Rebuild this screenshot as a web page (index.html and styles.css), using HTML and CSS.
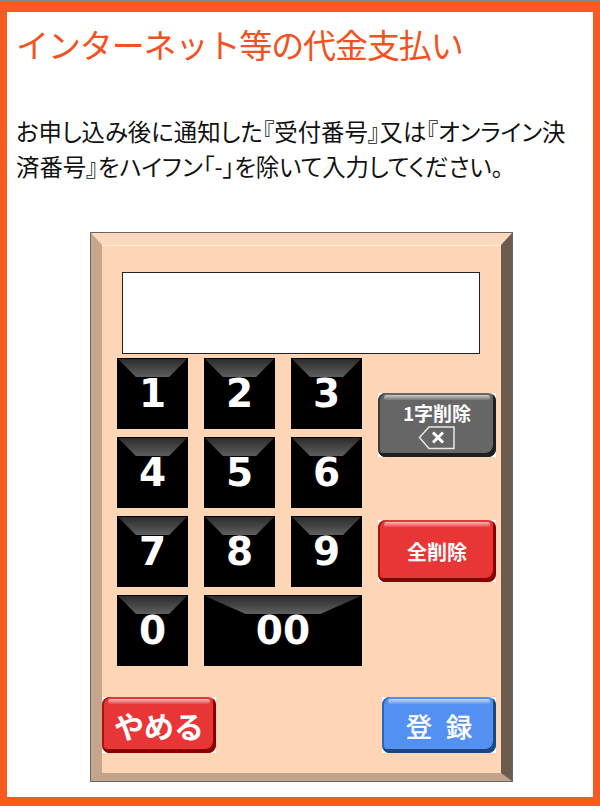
FILE: index.html

```html
<!DOCTYPE html>
<html lang="ja">
<head>
    <meta charset="UTF-8">
    <meta name="viewport" content="width=device-width, initial-scale=1.0">
    <title>インターネット等の代金支払い</title>
    <link rel="stylesheet" href="styles.css">
</head>
<body>

    <div class="frame">
        <h1 class="title">インターネット等の代金支払い</h1>
        <p class="guide">お申し込み後に通知した『受付番号』又は『オンライン決<br>済番号』をハイフン「-」を除いて入力してください。</p>

        <div class="panel">
            <div class="display"></div>

            <div class="pad-row">
                <div class="keypad">
                    <div class="key">1</div>
                    <div class="key">2</div>
                    <div class="key">3</div>
                    <div class="key">4</div>
                    <div class="key">5</div>
                    <div class="key">6</div>
                    <div class="key">7</div>
                    <div class="key">8</div>
                    <div class="key">9</div>
                    <div class="key">0</div>
                    <div class="key key-wide">00</div>
                </div>

                <div class="side">
                    <div class="btn btn-back">
                        <div class="face face-grey">
                            <span class="back-label">1字削除</span>
                            <svg class="back-icon" width="38" height="25" viewBox="0 0 38 25">
                                <path d="M1.5 12.5 L11 2 H36 V23.500 H11 Z" fill="none" stroke="#e8e8e8" stroke-width="1.500"/>
                                <path d="M15 7.500 L25 17.500 M25 7.500 L15 17.500" fill="none" stroke="#fff" stroke-width="3"/>
                            </svg>
                        </div>
                    </div>
                    <div class="btn btn-clear">
                        <div class="face face-red clear-label">全削除</div>
                    </div>
                </div>
            </div>

            <div class="actions">
                <div class="btn btn-action">
                    <div class="face face-red cancel-label">やめる</div>
                </div>
                <div class="btn btn-action">
                    <div class="face face-blue submit-label">登 録</div>
                </div>
            </div>
        </div>
    </div>

</body>
</html>
```

FILE: styles.css

```css
body {
    margin: 0;
    background-color: #fff;
    font-family: "Noto Sans CJK JP", "Noto Sans", sans-serif;
}

.frame {
    box-sizing: border-box;
    height: 805px;
    border-style: solid;
    border-color: #f95a22;
    border-width: 11px 7px 9px;
    box-shadow: 0 -1px 0 #888, 0 1px 0 #888;
    margin-top: 1px;
    overflow: hidden;
}

.title {
    margin: 10px 0 0 9px;
    font-size: 33px;
    line-height: 44px;
    letter-spacing: -1.100px;
    font-weight: normal;
    color: #f4511e;
    white-space: nowrap;
}

.guide {
    margin: 48px 0 0 9px;
    font-size: 23.400px;
    line-height: 35px;
    color: #111;
    white-space: nowrap;
    font-feature-settings: "palt";
}

.panel {
    box-sizing: border-box;
    display: flex;
    flex-direction: column;
    width: 421px;
    height: 548px;
    margin: 49px 0 0 84px;
    padding: 27px 5px 0 0;
    background-color: #fed5b5;
    border-style: solid;
    border-width: 12px 11px 8px;
    border-color: #ffd9bb #6d5b4d #c2a48c #c5a58c;
    box-shadow: 0 0 0 1px #666, inset 0 1px 0 #ffeedd;
}

.display {
    box-sizing: border-box;
    width: 358px;
    height: 82px;
    margin-left: 20px;
    background-color: #fff;
    border: 1px solid #222;
}

.pad-row {
    display: flex;
    margin: 4px 0 0 15px;
}

.keypad {
    display: grid;
    grid-template-columns: repeat(3, 71px);
    grid-auto-rows: 71px;
    gap: 8px 16px;
}

.key {
    position: relative;
    display: flex;
    align-items: center;
    justify-content: center;
    background-color: #000;
    color: #fff;
    font-family: "DejaVu Sans", sans-serif;
    font-size: 39px;
    font-weight: bold;
}

.key::before {
    content: "";
    position: absolute;
    top: 1px;
    left: 1px;
    right: 1px;
    height: 18px;
    background: linear-gradient(#2c2c2c, #5e5e5e);
    clip-path: polygon(0 0, 100% 0, 74% 100%, 26% 100%);
}

.key-wide {
    grid-column: span 2;
}

.side {
    display: flex;
    flex-direction: column;
    gap: 63px;
    margin: 35px 0 0 16px;
}

.btn {
    background-color: #fff;
    color: #fff;
    font-weight: bold;
}

.btn-back {
    width: 118px;
    height: 64px;
}

.btn-clear {
    width: 118px;
    height: 62px;
}

.btn-action {
    width: 114px;
    height: 56px;
}

.face {
    position: relative;
    box-sizing: border-box;
    height: 100%;
    display: flex;
    flex-direction: column;
    align-items: center;
    justify-content: center;
    border-radius: 8px;
}

.face::before {
    content: "";
    position: absolute;
    top: 2px;
    left: 6px;
    right: 6px;
    height: 5px;
    border-radius: 3px;
    background: linear-gradient(rgba(255, 255, 255, 0.65), rgba(255, 255, 255, 0.1));
}

.face-grey {
    background-color: #666;
    box-shadow: inset -3px -4px 0 #1e1e1e, inset 2px 0 0 #3c3c3c;
}

.face-red {
    background-color: #e83535;
    box-shadow: inset -3px -4px 0 #8a0000, inset 2px 0 0 #a81414;
}

.face-blue {
    background-color: #5291f2;
    box-shadow: inset -3px -4px 0 #1d4580, inset 2px 0 0 #2e64b4;
}

.back-label {
    font-size: 19px;
    line-height: 24px;
}

.back-icon {
    display: block;
}

.clear-label {
    font-size: 20px;
}

.cancel-label {
    font-size: 30px;
}

.submit-label {
    font-size: 26px;
    font-weight: normal;
    -webkit-text-stroke: 0.5px #fff;
    word-spacing: 8px;
}

.actions {
    display: flex;
    justify-content: space-between;
    margin-top: 31px;
}
```
